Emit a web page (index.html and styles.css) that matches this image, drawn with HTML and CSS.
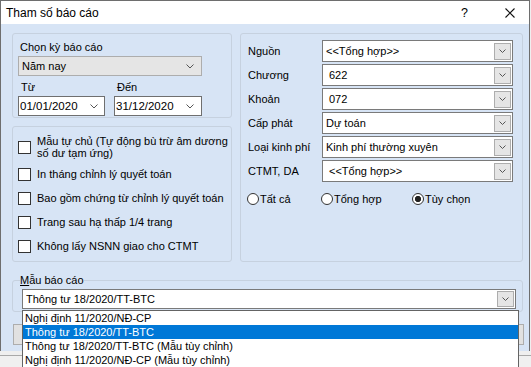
FILE: index.html
```html
<!DOCTYPE html>
<html>
  <head>
    <meta charset="utf-8" />
    <title>Tham số báo cáo</title>
    <link rel="stylesheet" href="styles.css">
  </head>
  <body>
    <div class="window">
      <div class="titlebar">
        <span class="title">Tham số báo cáo</span>
        <span class="help">?</span>
        <svg class="close" width="10" height="10" viewBox="0 0 10 10">
          <path d="M0.5 0.5 L9.5 9.5 M9.5 0.5 L0.5 9.5" stroke="#111" stroke-width="1.1" fill="none" />
        </svg>
      </div>

      <div class="client">
        <div class="top">
          <div class="left-col">
            <!-- kỳ báo cáo -->
            <div class="box period">
              <div class="period-label">Chọn kỳ báo cáo</div>
              <div class="combo-flat">
                <span>Năm nay</span>
                <svg width="8" height="5" viewBox="0 0 8 5"><path d="M0.5 0.5 L4 4 L7.5 0.5" stroke="#555" fill="none" /></svg>
              </div>
              <div class="range-labels"><span>Từ</span><span>Đến</span></div>
              <div class="range">
                <div class="date">
                  <span>01/01/2020</span>
                  <svg width="8" height="5" viewBox="0 0 8 5"><path d="M0.5 0.5 L4 4 L7.5 0.5" stroke="#555" fill="none" /></svg>
                </div>
                <div class="date wide">
                  <span>31/12/2020</span>
                  <svg width="8" height="5" viewBox="0 0 8 5"><path d="M0.5 0.5 L4 4 L7.5 0.5" stroke="#555" fill="none" /></svg>
                </div>
              </div>
            </div>

            <!-- tùy chọn in -->
            <div class="box options">
              <div class="check two-line">
                <span class="tick"></span>
                <span>Mẫu tự chủ (Tự động bù trừ âm dương<br>số dư tạm ứng)</span>
              </div>
              <div class="check"><span class="tick"></span><span>In tháng chỉnh lý quyết toán</span></div>
              <div class="check"><span class="tick"></span><span>Bao gồm chứng từ chỉnh lý quyết toán</span></div>
              <div class="check"><span class="tick"></span><span>Trang sau hạ thấp 1/4 trang</span></div>
              <div class="check"><span class="tick"></span><span>Không lấy NSNN giao cho CTMT</span></div>
            </div>
          </div>

          <!-- bộ lọc -->
          <div class="box filters">
            <div class="filter-grid">
              <span>Nguồn</span>
              <div class="combo">
                <span>&lt;&lt;Tổng hợp&gt;&gt;</span>
                <span class="drop-btn"><svg width="7" height="4" viewBox="0 0 7 4"><path d="M0.5 0.5 L3.5 3.5 L6.5 0.5" stroke="#555" fill="none" /></svg></span>
              </div>
              <span>Chương</span>
              <div class="combo">
                <span class="indent">622</span>
                <span class="drop-btn"><svg width="7" height="4" viewBox="0 0 7 4"><path d="M0.5 0.5 L3.5 3.5 L6.5 0.5" stroke="#555" fill="none" /></svg></span>
              </div>
              <span>Khoản</span>
              <div class="combo">
                <span class="indent">072</span>
                <span class="drop-btn"><svg width="7" height="4" viewBox="0 0 7 4"><path d="M0.5 0.5 L3.5 3.5 L6.5 0.5" stroke="#555" fill="none" /></svg></span>
              </div>
              <span>Cấp phát</span>
              <div class="combo">
                <span>Dự toán</span>
                <span class="drop-btn"><svg width="7" height="4" viewBox="0 0 7 4"><path d="M0.5 0.5 L3.5 3.5 L6.5 0.5" stroke="#555" fill="none" /></svg></span>
              </div>
              <span>Loại kinh phí</span>
              <div class="combo">
                <span>Kinh phí thường xuyên</span>
                <span class="drop-btn"><svg width="7" height="4" viewBox="0 0 7 4"><path d="M0.5 0.5 L3.5 3.5 L6.5 0.5" stroke="#555" fill="none" /></svg></span>
              </div>
              <span>CTMT, DA</span>
              <div class="combo">
                <span class="indent">&lt;&lt;Tổng hợp&gt;&gt;</span>
                <span class="drop-btn"><svg width="7" height="4" viewBox="0 0 7 4"><path d="M0.5 0.5 L3.5 3.5 L6.5 0.5" stroke="#555" fill="none" /></svg></span>
              </div>
            </div>

            <div class="radios">
              <div class="radio r-all"><span class="dot"></span><span>Tất cả</span></div>
              <div class="radio r-sum"><span class="dot"></span><span>Tổng hợp</span></div>
              <div class="radio"><span class="dot on"></span><span>Tùy chọn</span></div>
            </div>
          </div>
        </div>

        <fieldset class="template">
          <legend><u>M</u>ẫu báo cáo</legend>
          <div class="template-combo">
            <span>Thông tư 18/2020/TT-BTC</span>
            <span class="drop-btn"><svg width="7" height="4" viewBox="0 0 7 4"><path d="M0.5 0.5 L3.5 3.5 L6.5 0.5" stroke="#555" fill="none" /></svg></span>
            <!-- danh sách đang mở -->
            <ul class="dropdown">
              <li>Nghị định 11/2020/NĐ-CP</li>
              <li class="selected">Thông tư 18/2020/TT-BTC</li>
              <li>Thông tư 18/2020/TT-BTC (Mẫu tùy chỉnh)</li>
              <li>Nghị định 11/2020/NĐ-CP (Mẫu tùy chỉnh)</li>
            </ul>
          </div>
        </fieldset>

        <div class="buttons">
          <span class="btn"></span>
          <span class="btn"></span>
        </div>
      </div>
    </div>
    <div class="desk"></div>
  </body>
</html>
```

FILE: styles.css
```css
body {
  margin: 0;
  background-color: #efefef;
  font-family: "Liberation Sans", Arial, sans-serif;
  font-size: 11px;
  color: #000;
}

.window {
  width: 530px;
  height: 351px;
  box-sizing: border-box;
  border: 1px solid #6e6e6e;
  border-bottom: none;
  display: flex;
  flex-direction: column;
}

.titlebar {
  height: 23px;
  flex: none;
  background-color: #fff;
  display: flex;
  align-items: center;
  padding-left: 5px;
  font-size: 12px;
}

.title {
  flex: 1;
}

.help {
  font-size: 12.5px;
  margin-right: 37px;
}

.close {
  margin-right: 14px;
}

.client {
  flex: 1;
  background-color: #d7e4f5;
  padding: 9px 6px 0 11px;
}

.top {
  display: flex;
  gap: 8px;
  height: 229px;
}

.left-col {
  width: 220px;
  display: flex;
  flex-direction: column;
  gap: 8px;
}

.box {
  border: 1px solid #c6d1df;
  border-radius: 3px;
  box-sizing: border-box;
}

.period {
  height: 85px;
}

.period-label {
  margin: 6px 0 0 7px;
  line-height: 14px;
}

.combo-flat {
  margin: 2px 0 0 5px;
  width: 184px;
  height: 20px;
  box-sizing: border-box;
  border: 1px solid #adadad;
  background-color: #e5e5e5;
  display: flex;
  align-items: center;
  justify-content: space-between;
  padding: 0 7px 0 3px;
}

.range-labels {
  margin: 4px 0 0 5px;
  display: grid;
  grid-template-columns: 96px auto;
  line-height: 14px;
}

.range-labels span {
  padding-left: 3px;
}

.range {
  margin: 2px 0 0 5px;
  display: flex;
  gap: 9px;
}

.date {
  width: 87px;
  height: 20px;
  box-sizing: border-box;
  border: 1px solid #6f6f6f;
  background-color: #fff;
  display: flex;
  align-items: center;
  justify-content: space-between;
  padding: 0 6px 0 1px;
  font-size: 11.5px;
}

.date.wide {
  width: 88px;
  padding-right: 7px;
}

.options {
  height: 136px;
  padding: 8px 0 0 5px;
}

.check {
  display: flex;
  align-items: center;
  gap: 6px;
  height: 24px;
  line-height: 12px;
}

.check.two-line {
  margin-bottom: 3px;
}

.tick {
  flex: none;
  width: 13px;
  height: 13px;
  box-sizing: border-box;
  border: 1px solid #333;
  background-color: #fff;
}

.filters {
  width: 283px;
  padding: 6px 0 0 7px;
}

.filter-grid {
  display: grid;
  grid-template-columns: 74px 191px;
  grid-auto-rows: 22px;
  row-gap: 2px;
  align-items: center;
}

.combo {
  height: 22px;
  box-sizing: border-box;
  border: 1px solid #7a7a7a;
  background-color: #fff;
  display: flex;
  align-items: center;
  justify-content: space-between;
  padding: 0 1px 0 3px;
}

.combo .indent {
  padding-left: 3px;
}

.drop-btn {
  width: 17px;
  height: 17px;
  box-sizing: border-box;
  border: 1px solid #adadad;
  background-color: #e5e5e5;
  display: flex;
  align-items: center;
  justify-content: center;
}

.radios {
  display: flex;
  margin: 10px 0 0 -1px;
  line-height: 14px;
}

.radio {
  display: flex;
  align-items: center;
  gap: 1px;
}

.r-all {
  width: 74px;
}

.r-sum {
  width: 91px;
}

.dot {
  width: 12px;
  height: 12px;
  box-sizing: border-box;
  border: 1px solid #333;
  border-radius: 50%;
  background-color: #fff;
}

.dot.on {
  background: radial-gradient(circle, #222 0 2.8px, #fff 3.4px);
}

.template {
  margin: 11px 0 0;
  padding: 0 0 2px 7px;
  width: 511px;
  box-sizing: border-box;
  border: 1px solid #c6d1df;
  border-radius: 3px;
  min-inline-size: 0;
}

.template legend {
  padding: 0;
  line-height: 14px;
}

.template-combo {
  position: relative;
  margin: 2px 0 0 2px;
  width: 494px;
  height: 20px;
  box-sizing: border-box;
  border: 1px solid #7a7a7a;
  background-color: #fff;
  display: flex;
  align-items: center;
  justify-content: space-between;
  padding: 0 1px 0 3px;
}

.template-combo .drop-btn {
  height: 16px;
}

.dropdown {
  position: absolute;
  top: calc(100% + 2px);
  left: -1px;
  width: 497px;
  box-sizing: border-box;
  margin: 0;
  padding: 0;
  list-style: none;
  background-color: #fff;
  border: 1px solid #646464;
  z-index: 2;
}

.dropdown li {
  height: 14px;
  line-height: 14px;
  padding-left: 2px;
}

.dropdown li.selected {
  background-color: #0078d7;
  color: #fff;
}

.buttons {
  margin: 12px -1px 0 1px;
  display: flex;
  justify-content: space-between;
}

.btn {
  width: 90px;
  height: 21px;
  box-sizing: border-box;
  border: 1px solid #adadad;
  background-color: #e1e1e1;
}

.desk {
  height: 16px;
  margin-top: 4px;
  border-top: 1px solid #a9a9a9;
  background-color: #f0f0f0;
}
```
